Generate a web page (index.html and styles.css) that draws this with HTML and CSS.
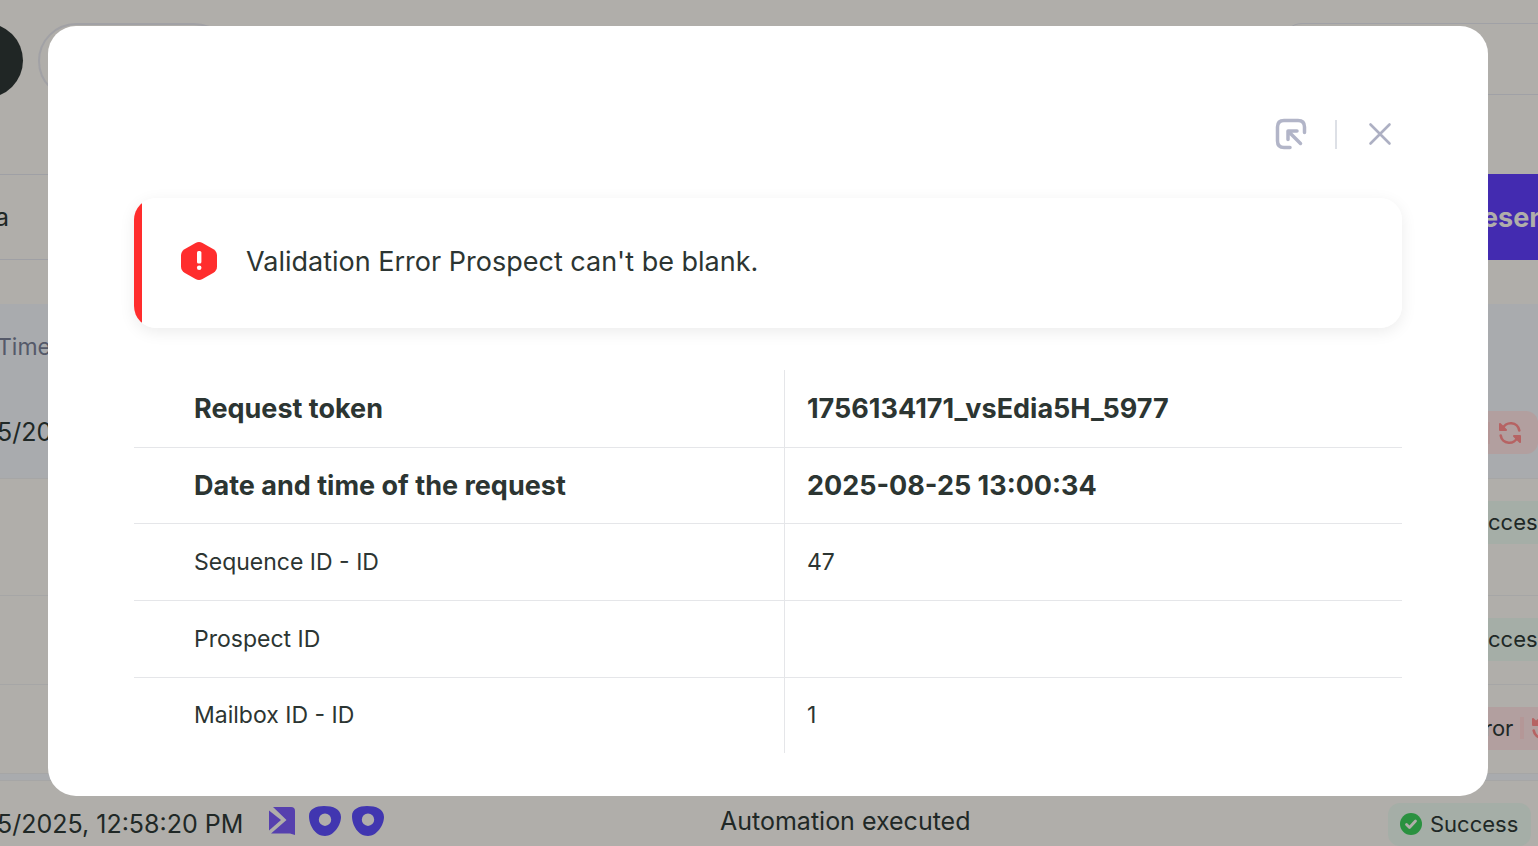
FILE: index.html
```html
<!DOCTYPE html>
<html lang="en">
<head>
<meta charset="utf-8">
<title>Automation history</title>
<link rel="stylesheet" href="styles.css">
</head>
<body>
<svg class="sprite" aria-hidden="true">
  <symbol id="refresh" viewBox="0 0 24 24"><path d="M4.500 8A8.700 8.700 0 0 1 21.300 9.500M19.500 16A8.700 8.700 0 0 1 2.700 14.500" fill="none" stroke="currentColor" stroke-width="2.600" stroke-linecap="round"/><path d="M2 3v6h6zM22 21v-6h-6z" fill="currentColor" stroke="currentColor" stroke-width="2" stroke-linejoin="round"/></symbol>
  <symbol id="drop" viewBox="0 0 34 32"><path fill-rule="evenodd" d="M1 11C1 4 8 1 16 1C25 1 33 4 33 12C33 20 26 31 17 31C7 31 1 20 1 11ZM17 8.500a6.200 6.200 0 1 0 0 12.400a6.200 6.200 0 1 0 0-12.400Z" fill="#4136b0"/></symbol>
</svg>
<main class="page">
  <header class="toolbar">
    <button class="pill-dark" type="button" aria-label="All"></button>
    <button class="pill-outline" type="button" aria-label="Filter"></button>
    <input class="search" type="search" aria-label="Search">
  </header>
  <nav class="tabs">
    <a class="tab" href="#">a</a>
    <button class="resend" type="button">esend</button>
  </nav>
  <table class="log">
    <thead>
      <tr><th class="time">Time</th><th class="apps"></th><th class="what"></th><th class="status"></th></tr>
    </thead>
    <tbody>
      <tr class="selected"><td>5/2025</td><td></td><td></td><td><span class="badge error near"><i class="bar"></i><svg class="again"><use href="#refresh"/></svg></span></td></tr>
      <tr class="tall"><td></td><td></td><td></td><td><span class="badge success mid">ccess</span></td></tr>
      <tr><td></td><td></td><td></td><td><span class="badge success mid">ccess</span></td></tr>
      <tr><td></td><td></td><td></td><td><span class="badge error far">ror<i class="bar"></i><svg class="again"><use href="#refresh"/></svg></span></td></tr>
      <tr class="strip"><td colspan="4"></td></tr>
      <tr class="last"><td>5/2025, 12:58:20 PM</td>
        <td><div class="icons">
          <svg class="flag" viewBox="0 0 26 28"><path d="M4 0H22Q26 0 26 4V28L21 26.500H2L17.500 13Z" fill="#5640ae"/><path d="M0 3.500L12 13L0 23.500Z" fill="#5640ae"/></svg>
          <svg class="drop"><use href="#drop"/></svg>
          <svg class="drop"><use href="#drop"/></svg>
        </div></td>
        <td class="message">Automation executed</td>
        <td><span class="badge success"><svg class="tick" viewBox="0 0 22 22"><circle cx="11" cy="11" r="11" fill="#2a9140"/><path d="M6.500 11.500l3 3 6-6.500" fill="none" stroke="#b0aeaa" stroke-width="2.800" stroke-linecap="round" stroke-linejoin="round"/></svg>Success</span></td></tr>
    </tbody>
  </table>
</main>
<div class="overlay">
  <section class="modal" role="dialog" aria-modal="true" aria-label="Request details">
    <div class="actions">
      <button class="icon-button" type="button" aria-label="Expand"><svg class="expand" viewBox="0 0 32 32"><path d="M15 29.500H9Q2.500 29.500 2.500 23V9Q2.500 2.500 9 2.500H23Q29.500 2.500 29.500 9V14.500M13 21.500V13H22M13.500 13.500L25.500 25.500" fill="none" stroke="#b2b5c8" stroke-width="3.500" stroke-linecap="round" stroke-linejoin="round"/></svg></button>
      <span class="divider"></span>
      <button class="icon-button" type="button" aria-label="Close"><svg class="close" viewBox="0 0 24 24"><path d="M2.500 2.500l19 19M21.500 2.500l-19 19" fill="none" stroke="#adb0c3" stroke-width="2.600" stroke-linecap="round"/></svg></button>
    </div>
    <div class="alert" role="alert">
      <svg class="warn" viewBox="0 0 36 38"><path d="M14.500 1Q18-.8 21.500 1L32.500 7.200Q36 9.500 36 13.500V24.500Q36 28.500 32.500 30.800L21.500 37Q18 38.800 14.500 37L3.500 30.800Q0 28.500 0 24.500V13.500Q0 9.500 3.500 7.200Z" fill="#ff2d2d"/><rect x="16" y="9" width="4.400" height="12.500" rx="1.600" fill="#fff"/><circle cx="18.200" cy="25.700" r="2.300" fill="#fff"/></svg>
      <p>Validation Error Prospect can't be blank.</p>
    </div>
    <table class="details">
      <tbody>
        <tr class="strong"><th scope="row">Request token</th><td>1756134171_vsEdia5H_5977</td></tr>
        <tr class="strong"><th scope="row">Date and time of the request</th><td>2025-08-25 13:00:34</td></tr>
        <tr><th scope="row">Sequence ID - ID</th><td>47</td></tr>
        <tr><th scope="row">Prospect ID</th><td></td></tr>
        <tr><th scope="row">Mailbox ID - ID</th><td>1</td></tr>
      </tbody>
    </table>
  </section>
</div>
</body>
</html>
```
FILE: styles.css
```css
* { box-sizing: border-box; }
html, body { height: 100%; }
body {
  margin: 0;
  overflow: hidden;
  background: #b0aeaa;
  color: #202826;
  font-family: Inter, sans-serif;
  font-size: 25px;
}
button { font: inherit; border: 0; padding: 0; }
.sprite { position: absolute; width: 0; height: 0; }

.page { height: 100%; overflow: hidden; }
.toolbar {
  display: flex;
  height: 174px;
  padding-top: 23px;
}
.pill-dark {
  width: 84px;
  height: 75px;
  margin-left: -61px;
  border-radius: 38px;
  background: #202625;
}
.pill-outline {
  width: 194px;
  height: 76px;
  margin-left: 15px;
  border: 2px solid #a1a1a5;
  border-radius: 38px;
  background: transparent;
}
.search {
  width: 296px;
  height: 72px;
  margin: 0 -40px 0 auto;
  border: 1px solid #a0a1a6;
  border-radius: 20px;
  background: transparent;
}
.tabs {
  display: flex;
  align-items: center;
  justify-content: space-between;
  height: 86px;
  margin-bottom: 44px;
  border: solid #9fa0a5;
  border-width: 1px 0;
}
.tab { margin-left: -5px; color: inherit; text-decoration: none; }
.resend {
  width: 120px;
  height: 86px;
  margin-right: -40px;
  padding-left: 24px;
  background: #432bb0;
  color: #b0aeaa;
  font-size: 27px;
  font-weight: 700;
  text-align: left;
}

.log {
  width: calc(100% + 73px);
  margin-left: -3px;
  table-layout: fixed;
  border-collapse: collapse;
}
.log th, .log td { padding: 0; vertical-align: top; text-align: left; }
.log thead, .selected { background: #a9abae; }
.log .time { height: 85px; vertical-align: middle; color: #555969; font-size: 23px; font-weight: 400; }
.log td { height: 89px; padding-top: 22px; line-height: 42px; border-bottom: 1px solid #a6a6a6; }
.log .tall td { height: 117px; }
.log .strip td { height: 7px; padding: 0; background: #a9abae; }
.log .time { width: 272px; }
.log .apps { width: 160px; }
.log .status { width: 220px; }
.log .message { padding: 19px 0 0 291px; white-space: nowrap; }
.icons { display: flex; align-items: center; gap: 9px; height: 36px; }
.flag { width: 26px; height: 28px; margin-right: 4px; }
.drop { width: 34px; height: 32px; }

.badge {
  display: flex;
  align-items: center;
  width: 143px;
  height: 43px;
  padding: 0 12px;
  border-radius: 12px;
  gap: 8px;
  font-size: 22px;
}
.success { background: #a5aea7; }
.error { background: #b29f9f; }
.near { width: 150px; justify-content: flex-end; padding-right: 16px; }
.mid { width: 220px; padding-left: 100px; }
.far { width: 220px; padding-left: 96px; gap: 7px; }
.bar { flex: none; width: 4px; height: 22px; background: #b49797; }
.again { flex: none; width: 24px; height: 24px; color: #b66363; }
.tick { width: 22px; height: 22px; }

.overlay {
  position: fixed;
  inset: 0;
  padding: 26px 50px 50px 48px;
}
.modal {
  height: 100%;
  padding: 88px 86px 43px;
  border-radius: 28px;
  background: #fff;
  color: #2c3532;
}
.actions {
  display: flex;
  align-items: center;
  justify-content: flex-end;
  gap: 28px;
  height: 40px;
  padding-right: 10px;
}
.icon-button { display: flex; background: transparent; }
.expand { width: 32px; height: 32px; }
.divider { width: 2px; height: 29px; margin-right: 3px; background: #dde0e6; }
.close { width: 24px; height: 24px; }
.alert {
  display: flex;
  align-items: center;
  gap: 29px;
  height: 130px;
  margin: 44px 0 42px;
  padding: 0 39px 4px 47px;
  border-radius: 22px;
  background: linear-gradient(to right, #ff2d2d 8px, #fff 8px);
  box-shadow: 0 4px 16px rgba(0, 0, 0, .08);
  font-size: 27px;
}
.alert p { margin: 0; }
.warn { width: 36px; height: 38px; }
.details {
  width: 100%;
  table-layout: fixed;
  border-collapse: collapse;
  font-size: 23px;
}
.details th, .details td {
  height: 77px;
  padding: 0 0 0 22px;
  border-bottom: 1px solid #e5e6e9;
  text-align: left;
  font-weight: 400;
}
.details th {
  width: 51.300%;
  padding-left: 60px;
  border-right: 1px solid #e5e6e9;
}
.details tr:nth-child(2) > * { height: 76px; }
.details tr:last-child > * { height: 76px; border-bottom: 0; }
.details .strong > * { font-size: 27px; font-weight: 700; }
```
